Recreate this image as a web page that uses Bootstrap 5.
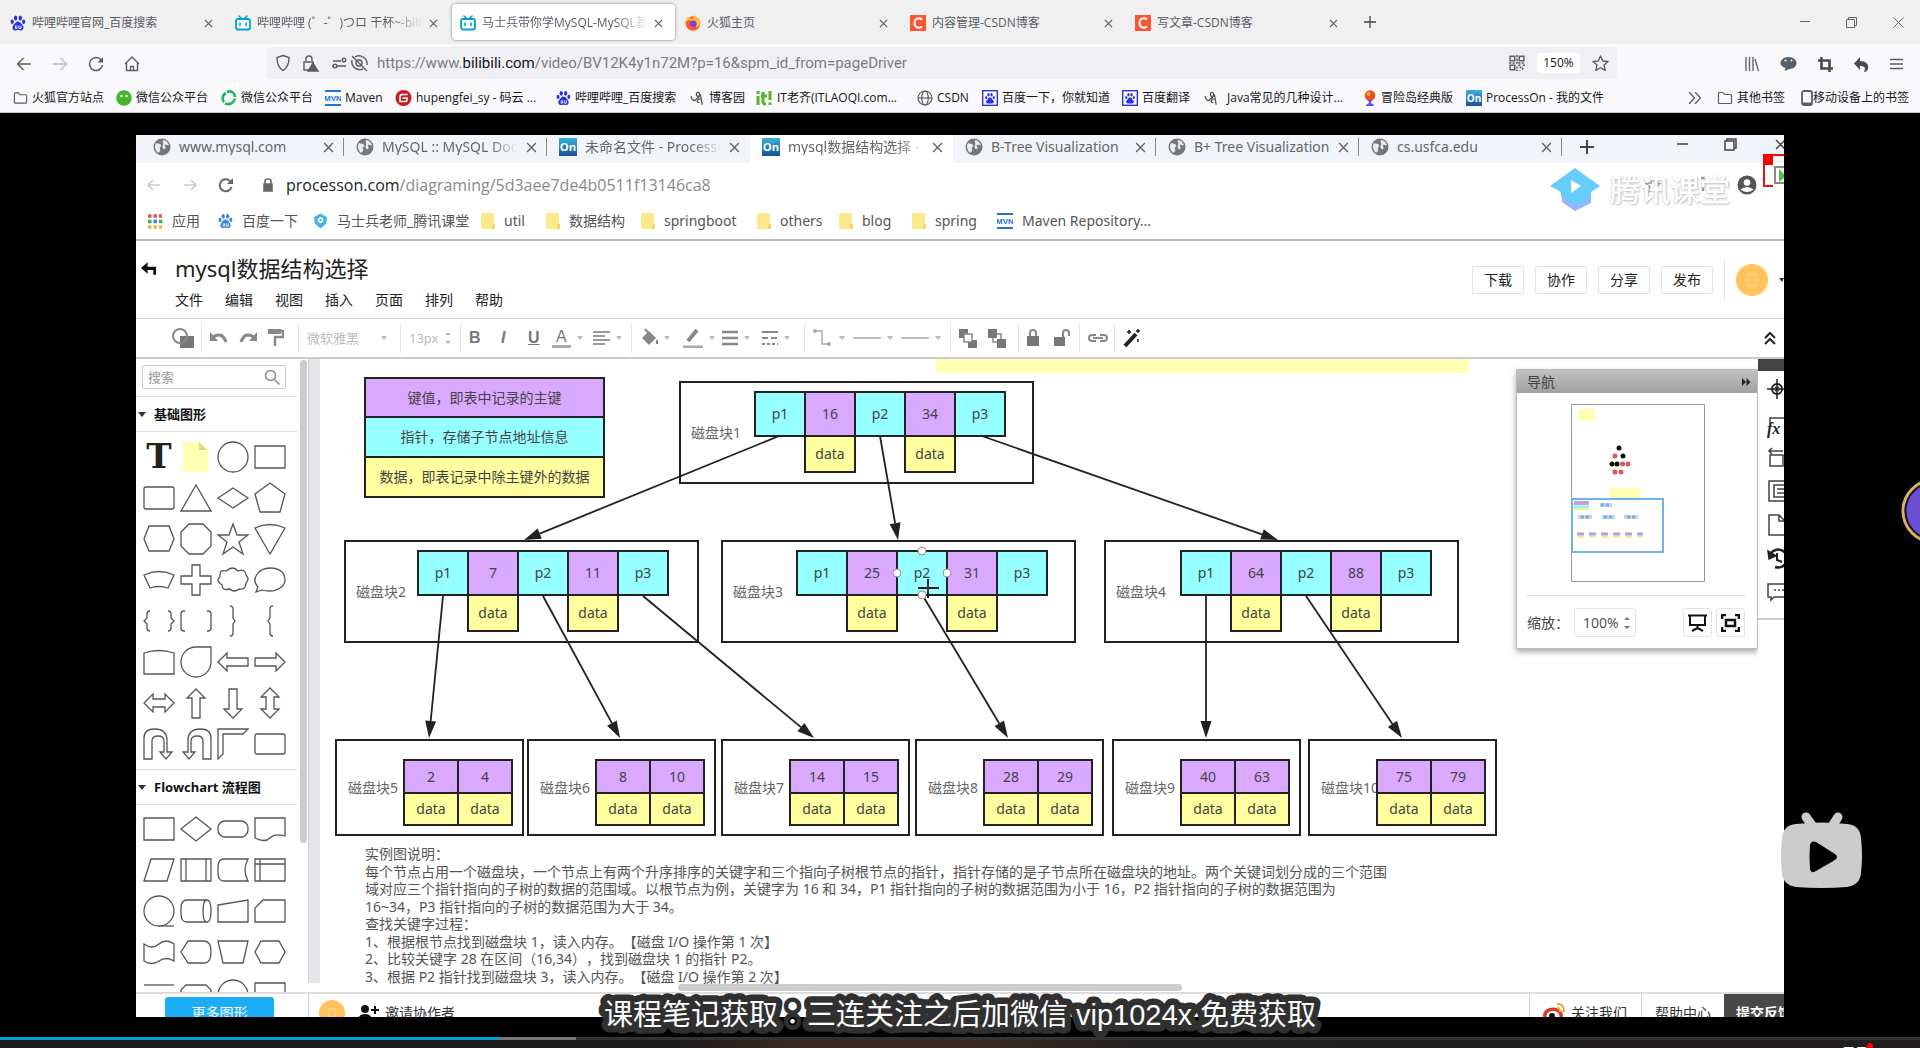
<!DOCTYPE html>
<html lang="zh-CN">
<head>
<meta charset="utf-8">
<meta name="viewport" content="width=device-width, initial-scale=1">
<title>马士兵带你学MySQL</title>
<link href="https://cdn.jsdelivr.net/npm/bootstrap@5.3.0/dist/css/bootstrap.min.css" rel="stylesheet">
<style>
:root{--ui:"Noto Sans","Noto Sans CJK SC",sans-serif}
body{font-family:"Open Sans","Noto Sans CJK SC",sans-serif;font-size:12px;line-height:16px;color:#15141a;background:#000;overflow:hidden}
svg{display:block;flex:none}
button,a.plain{background:none;border:0;padding:0;color:inherit;font:inherit;text-decoration:none;text-align:left}
.clip{overflow:hidden;white-space:nowrap}
.fadeout{-webkit-mask-image:linear-gradient(90deg,#000 80%,transparent)}
/* outer browser */
.tabstrip{height:44px;background:#f0f0f0;padding-left:2px}
.ff-tab{width:225px;height:44px;padding:4px 2px 4px 0}
.ff-tab>div{height:36px;padding:2px 12px 0 8px;gap:6px;color:#5b5b66;border-radius:4px}
.ff-tab.on>div{background:#fff;box-shadow:0 0 3px rgba(0,0,0,.5)}
.newtab{margin-left:12px!important}
.winbtns{gap:36px}
.navrow{height:36px;background:#f9f9fb}
.navbtns{gap:20px;top:12px}
.exts{gap:21px;padding-right:17px;top:12px}
.addr{height:32px;background:#f0f0f4;border-radius:4px;margin:2px 303px 0 267px;padding:0 8px;font-size:15px;color:#7b7b85}
.addr .urltext{font-family:Roboto,sans-serif;padding-left:8px;line-height:20px}
.addr b{font-weight:400;color:#15141a}
.zoomlvl{background:#fff;border-radius:3px;width:43px;height:20px;line-height:20px;text-align:center;font-size:12px;color:#15141a}
.bmrow{height:33px;background:#f9f9fb;border-bottom:1px solid #ccc;padding:4px 11px 0 13px}
.bmgrid{display:grid;grid-template-columns:103px 105px 104px 70px 161px 134px 66px 161px 65px 140px 82px 159px 103px 150px;align-items:center}
.bm{display:flex;align-items:center;gap:4px;white-space:nowrap}
/* stage */
.stage{padding:22px 136px 20px;min-height:0}
.video{background:#fff;color:#444;font-family:var(--ui);overflow:hidden;position:relative}
.c-tabs{height:28px;background:#f1f4f9;font-size:14px;padding-left:5px}
.c-tab{width:203px;height:28px;padding:0 9px 0 12px;gap:8px;border-right:1px solid transparent;margin-top:-2px;color:#666}
.c-tab.sep{border-image:linear-gradient(transparent 20%,#888 20%,#888 80%,transparent 80%) 1}
.c-tab.on{background:#fff;height:30px;border-bottom:2px solid #fff}
.c-url{height:44px;font-size:16px;color:#8a8a8a;padding:0 27px 0 9px;font-family:"Open Sans",sans-serif}
.c-bms{height:34px;border-bottom:2px solid #bbb;font-size:14px;color:#555;padding:0 0 5px 11px}
.c-bmgrid{display:grid;grid-template-columns:71px 95px 168px 65px 95px 116px 82px 73px 85px 150px;align-items:center}
.c-bmgrid .bm{gap:9px}
.p-head{height:78px;border-bottom:1px solid #ccc;color:#222}
.p-back{margin-right:17px}
.p-title{font-size:22px;line-height:24px;margin-top:-1px}
.p-menu{gap:22px;font-size:14px}
.p-acts{gap:11px}
.p-acts .vline{height:38px}
.p-acts .car{border-top-color:#333;border-width:4px 2px 0 3px}
.p-btn{width:52px;height:28px;border:1px solid #e2e2e2;border-radius:2px;font-size:14px;text-align:center!important}
.avatar{width:32px;height:32px;border-radius:50%;background:#ffc25c}
.avatar.sm{width:26px;height:26px}
.p-tools{height:40px;border-bottom:2px solid #ccc;font-size:13px;color:#bbb;padding:0 7px 0 36px}
.t-grid{display:grid;height:38px;align-items:center;grid-template-columns:38px 29px 28px 40px 102px 60px 32px 27px 24px 41px 47px 43px 39px 40px 51px 26px 48px 72px 29px 39px 27px 34px 35px 30px}
.t-grid>*{height:38px;display:flex;align-items:center;gap:6px;position:relative}
.t-grid>.dv::before{content:"";position:absolute;left:-9px;top:4px;bottom:4px;border-left:1px solid #e4e4e4}
.t-grid .ts{font-family:"Liberation Sans",sans-serif;font-size:16px;color:#777}
.t-grid .ul{border-bottom:3px solid #aaa;line-height:17px;padding:0 4px}
.car{width:0;height:0;border:3px solid transparent;border-top:4px solid #bbb;border-bottom:0}
.palette{width:172px;overflow:hidden}
.p-search{margin:6px 0 7px 6px;width:144px;height:24px;border:1px solid #ccc;border-radius:2px;padding:0 5px}
.p-search input{border:0;outline:0;padding:0;width:100px;font-size:13px;color:#666;background:none}
.p-search input::placeholder{color:#999}
.sect{height:36px;border-top:1px solid #ddd;border-bottom:1px solid #ddd;width:161px;font-weight:700;font-size:13px;color:#111;padding-left:2px;gap:8px}
.sect .car{border-width:4px;border-top:5px solid #333;border-bottom:0}
.shapes{display:grid;grid-template-columns:repeat(4,37px);grid-auto-rows:1fr;padding-left:5px;margin:5px 0 9px}
.shapes+.sect+.shapes{margin-top:4px}
.shapes svg{width:37px;height:100%;overflow:visible;fill:#fff;stroke:#555;stroke-width:1.3}
.s1{height:323px}.s2{height:202px}
.thumb{width:7px;background:#ccc;border-radius:4px;height:483px;margin-left:-8px;margin-top:1px}
.gutter{width:12px;background:#e6e6ea;border-left:1px solid #d0d0d0;margin-left:1px;margin-bottom:9px}
.board{position:relative;overflow:hidden;min-width:0}
.board svg text{font-family:var(--ui);font-size:14px;text-spacing-trim:space-all}
.navpanel{position:absolute;right:0;top:10px;width:242px;height:280px;background:#fff;border:1px solid #bbb;box-shadow:0 3px 6px rgba(0,0,0,.35);font-size:14px}
.navpanel .hd{height:23px;background:linear-gradient(#c2c2c2,#a0a0a0);color:#444;padding:0 6px 0 10px}
.navpanel .map{margin:11px 0 13px 54px}
.navpanel .ft{border-top:1px solid #ddd;margin:0 12px 0 10px;padding-top:12px}
.navpanel .zoombox{width:62px;margin-left:5px}
.navpanel input{width:47px;padding:0 0 0 8px;border:0;font-size:14px;color:#555}
.box{border:1px solid #e4e4e4;border-radius:3px;height:29px}
.rail{width:26px}
.rail .cap{height:12px;background:#444}
.rail .body{height:249px;border-bottom:2px solid #ccc;padding:1px 0 0 8px}
.hthumb{position:absolute;left:358px;top:625px;width:504px;height:7px;border-radius:4px;background:#ccc}
.p-foot{height:25px;overflow:hidden;border-top:2px solid #ddd;font-size:14px;color:#333}
.p-foot>div{height:38px}
.more{width:109px;height:32px;border-radius:3px;background:#1badf5;color:#fff;margin:3px 34px 0 29px;text-align:center!important}
.fcell{border-left:1px solid #ccc;height:38px;padding-left:13px!important}
.fcell.fu{padding-left:10px!important}
a.plain.fcell{border-left:1px solid #ccc}
.f1{width:112px;gap:5px}.f2{width:83px}
a.plain.fdark{width:60px;height:38px;padding-left:12px;background:#484848;color:#fff;font-weight:700}
.overlay{position:absolute}
.wmark{right:54px;top:33px;gap:10px;font-size:30px;line-height:44px;color:#fff;text-shadow:1px 1px 2px #bbb,-1px 0 1px #e4e4e4;font-weight:500}
.redbox{right:0;top:19px}
.sub{left:0;right:0;bottom:0;height:70px}
.sub text{font:29px "Liberation Sans","Noto Sans CJK SC",sans-serif;fill:#fff;stroke:#303030;stroke-width:13px;stroke-linejoin:round;paint-order:stroke}
.sub .mid{font-family:"Noto Sans CJK TC",sans-serif}
.tv{right:57px;bottom:148px}
.ball{right:0;top:365px}
.prog{height:3px;background:#333}
.task{height:8px;background:linear-gradient(90deg,#1d1d1e 35%,#3b2822 42%,#3a2822 50%,#222 60%,#221f20);overflow:hidden;color:#fff;padding-right:52px;font-size:13px}
.dot{right:47px;top:3px}
</style>
</head>
<body class="d-flex flex-column vh-100">
<svg width="0" height="0" class="position-absolute" aria-hidden="true">
<defs>
<symbol id="baidu" viewBox="0 0 16 16"><g fill="currentColor"><ellipse cx="5.6" cy="3" rx="1.7" ry="2.5"/><ellipse cx="10.3" cy="3" rx="1.7" ry="2.5"/><ellipse cx="2.2" cy="6.8" rx="1.6" ry="2.2"/><ellipse cx="13.7" cy="6.8" rx="1.6" ry="2.2"/><path d="M8 6.5c2 0 3 2 4.500 3.500s1.500 5-1.500 5.500c-1.500 0-2-.4-3-.4s-1.500.4-3 .4C2 15 2 11.500 3.500 10S6 6.500 8 6.500z"/></g><path d="M5.500 10.500v3h1.500v-3M9 10.500v3h2v-3" stroke="#fff" fill="none" stroke-width=".9"/></symbol>
<symbol id="bdsq" viewBox="0 0 16 16"><rect x=".7" y=".7" width="14.600" height="14.600" fill="#fff" stroke="#2932e1" stroke-width="1.400"/><g fill="#2932e1"><ellipse cx="6.500" cy="4.800" rx="1.200" ry="1.700"/><ellipse cx="9.500" cy="4.800" rx="1.200" ry="1.700"/><ellipse cx="4.200" cy="7.500" rx="1.100" ry="1.500"/><ellipse cx="11.800" cy="7.500" rx="1.100" ry="1.500"/><path d="M8 7.200c2 .5 2 2 3.200 3s.8 3.300-1.200 3.300H6c-2 0-2.400-2.300-1.200-3.300s1.200-2.500 3.200-3z"/></g></symbol>
<symbol id="bili" viewBox="0 0 16 16"><path d="M4 1l2.500 2.500M12 1L9.500 3.500" stroke="#00a1d6" stroke-width="1.600" stroke-linecap="round"/><rect x="1" y="4" width="14" height="10.500" rx="2" fill="#fff" stroke="#00a1d6" stroke-width="1.800"/><path d="M5 8v2.500M11 8v2.500" stroke="#00a1d6" stroke-width="1.600" stroke-linecap="round"/></symbol>
<symbol id="fox" viewBox="0 0 16 16"><circle cx="8" cy="8.500" r="7.300" fill="#ff5a2e"/><path d="M1 7c0-3 1.500-4 2-5.500C5 3 6 4 8 4c0-2 1-3 2-4 1 2 5 3.500 5.300 8C13 15 9 11 9 8S3 4 1 7z" fill="#ffc02e"/><circle cx="8.300" cy="8.800" r="3.300" fill="#7a3fe0"/></symbol>
<symbol id="cs" viewBox="0 0 16 16"><rect width="16" height="16" fill="#fc5531"/><path d="M12 4.500C9 2 4.500 3.800 4.500 8s4.500 6 7.500 3.500" fill="none" stroke="#fff" stroke-width="1.900"/></symbol>
<symbol id="x" viewBox="0 0 10 10"><path d="M1 1l8 8M9 1L1 9" stroke="currentColor" stroke-width="1.300"/></symbol>
<symbol id="fold" viewBox="0 0 16 16"><path d="M1.500 12.500v-9q0-1 1-1h3.500l1.500 2h6q1 0 1 1v7q0 1-1 1h-11q-1 0-1-1z" fill="none" stroke="#5b5b66" stroke-width="1.200"/></symbol>
<symbol id="yfold" viewBox="0 0 14 16"><rect x="0" y="0" width="13" height="16" rx="1.500" fill="#fbe98c"/><path d="M11 11h3v5h-3z" fill="#f2d767"/></symbol>
<symbol id="mvn" viewBox="0 0 16 16"><rect y="0" width="16" height="2" fill="#1d76d2"/><rect y="14" width="16" height="2" fill="#1d76d2"/><text x="8" y="11" text-anchor="middle" font-size="8" font-weight="700" fill="#1d76d2" font-family="Liberation Sans,sans-serif">MVN</text></symbol>
<linearGradient id="og" x2="0" y2="1"><stop stop-color="#3ab0dc"/><stop offset="1" stop-color="#14539b"/></linearGradient>
<symbol id="on" viewBox="0 0 16 16"><rect width="16" height="16" fill="url(#og)"/><text x="8" y="11.500" text-anchor="middle" font-size="10" font-weight="700" fill="#fff" font-family="Open Sans,sans-serif">On</text></symbol>
<symbol id="blog" viewBox="0 0 16 16"><path d="M1 6c1 5 4 6 6 3M7 9c3-2 4-4 3-6S6 2 7 5s4 0 4-1l2 11M11 9c-3 0-5 4-1 4" fill="none" stroke="#555" stroke-width="1.400"/></symbol>
<symbol id="globe" viewBox="0 0 18 18"><circle cx="9" cy="9" r="8.500" fill="#777"/><path d="M3 5c2 1 4 0 5 2s-2 2-1 4-1 3-2 4C2 12 1 8 3 5zM10 2c3 0 5 3 6 5-2 1-3-1-4 0s2 3 0 4-3-2-2-4-1-3 0-5z" fill="#e8ebf0"/></symbol>
</defs>
</svg>

<header class="flex-shrink-0">
<div class="tabstrip d-flex align-items-center">
<div class="ff-tab"><div class="d-flex align-items-center"><svg width="16" height="16" color="#2932e1"><use href="#baidu"/></svg><span class="clip flex-grow-1">哔哩哔哩官网_百度搜索</span><button aria-label="关闭"><svg width="9" height="9"><use href="#x"/></svg></button></div></div>
<div class="ff-tab"><div class="d-flex align-items-center"><svg width="16" height="16"><use href="#bili"/></svg><span class="clip flex-grow-1 fadeout">哔哩哔哩 (゜-゜)つロ 干杯~-bili</span><button aria-label="关闭"><svg width="9" height="9"><use href="#x"/></svg></button></div></div>
<div class="ff-tab on"><div class="d-flex align-items-center"><svg width="16" height="16"><use href="#bili"/></svg><span class="clip flex-grow-1 fadeout">马士兵带你学MySQL-MySQL基</span><button aria-label="关闭"><svg width="9" height="9"><use href="#x"/></svg></button></div></div>
<div class="ff-tab"><div class="d-flex align-items-center"><svg width="16" height="16"><use href="#fox"/></svg><span class="clip flex-grow-1">火狐主页</span><button aria-label="关闭"><svg width="9" height="9"><use href="#x"/></svg></button></div></div>
<div class="ff-tab"><div class="d-flex align-items-center"><svg width="16" height="16"><use href="#cs"/></svg><span class="clip flex-grow-1">内容管理-CSDN博客</span><button aria-label="关闭"><svg width="9" height="9"><use href="#x"/></svg></button></div></div>
<div class="ff-tab"><div class="d-flex align-items-center"><svg width="16" height="16"><use href="#cs"/></svg><span class="clip flex-grow-1">写文章-CSDN博客</span><button aria-label="关闭"><svg width="9" height="9"><use href="#x"/></svg></button></div></div>
<button class="newtab" aria-label="新标签"><svg width="12" height="12" viewBox="0 0 12 12"><path d="M6 0v12M0 6h12" stroke="#444" stroke-width="1.300"/></svg></button>
<div class="winbtns ms-auto d-flex align-items-center pe-3">
<button aria-label="最小化"><svg width="10" height="10" viewBox="0 0 10 10"><path d="M0 4.500h10" stroke="#666"/></svg></button>
<button aria-label="还原"><svg width="11" height="11" viewBox="0 0 11 11"><path d="M.5 2.500h8v8h-8zM2.500 2.500v-2h8v8h-2" fill="none" stroke="#666"/></svg></button>
<button aria-label="关闭窗口"><svg width="11" height="11" viewBox="0 0 11 11"><path d="M.5.5l10 10M10.500.5l-10 10" stroke="#666"/></svg></button>
</div>
</div>
<div class="navrow d-flex align-items-center position-relative">
<div class="overlay navbtns d-flex align-items-center ps-3">
<button aria-label="后退"><svg width="16" height="16" viewBox="0 0 16 16"><path d="M15 8H1.500M7.500 2l-6 6 6 6" fill="none" stroke="#5b5b66" stroke-width="1.400"/></svg></button>
<button aria-label="前进"><svg width="16" height="16" viewBox="0 0 16 16"><path d="M1 8h13.500M8.500 2l6 6-6 6" fill="none" stroke="#bdbdc2" stroke-width="1.400"/></svg></button>
<button aria-label="刷新"><svg width="16" height="16" viewBox="0 0 16 16"><path d="M13.500 4.500A6.500 6.500 0 1 0 14.500 9" fill="none" stroke="#5b5b66" stroke-width="1.500"/><path d="M15 1v5.500H9.500z" fill="#5b5b66"/></svg></button>
<button aria-label="主页"><svg width="16" height="16" viewBox="0 0 16 16"><path d="M1 8l7-7 7 7M2.500 7v7.500h11V7M6.500 14.500v-4h3v4" fill="none" stroke="#5b5b66" stroke-width="1.400"/></svg></button>
</div>
<div class="addr d-flex align-items-center flex-grow-1">
<svg width="94" height="18" viewBox="0 0 94 18" fill="none" stroke="#5b5b66" stroke-width="1.400"><path d="M8 1.500l6 2c0 6-1 10-6 13-5-3-6-7-6-13z"/><path d="M31 7V5a3 3 0 0 1 6 0v2M36 16h-7V8h9v2"/><path d="M38 9l5 8H33z" fill="#5b5b66"/><path d="M58 7h8M57 12h14" /><circle cx="69" cy="6" r="1.800"/><circle cx="60" cy="12" r="1.800" fill="#f0f0f4"/><circle cx="84" cy="9" r="3"/><path d="M80 3a8 8 0 0 1 12 8M88 15a8 8 0 0 1-11-9M77 2l15 15"/></svg>
<div class="clip flex-grow-1 urltext" role="textbox" contenteditable="true" aria-label="地址">https://www.<b>bilibili.com</b>/video/BV12K4y1n72M?p=16&amp;spm_id_from=pageDriver</div>
<svg class="me-2" width="16" height="16" viewBox="0 0 14 14" fill="none" stroke="#5b5b66" stroke-width="1.300"><path d="M1 1h4v4H1zM9 1h4v4H9zM1 9h4v4H1z"/><path d="M7 0v7H0M8 7h6M8 9h2v2h2v3M12 9h2M7 10v4h3" stroke-dasharray="2 1"/></svg>
<span class="zoomlvl mx-1">150%</span>
<svg class="ms-2" width="17" height="17" viewBox="0 0 16 16"><path d="M8 1l2.100 4.600 5 .5-3.800 3.400 1.100 5L8 12l-4.400 2.500 1.100-5L.9 6.100l5-.5z" fill="none" stroke="#5b5b66" stroke-width="1.300" stroke-linejoin="round"/></svg>
</div>
<div class="overlay exts end-0 d-flex align-items-center">
<svg width="14" height="16" viewBox="0 0 14 16" stroke="#5b5b66" stroke-width="1.300"><path d="M1 1v14M4.500 1v14M8 1v14M10 3l3.500 12"/></svg>
<svg width="17" height="16" viewBox="0 0 17 16"><path d="M8.500 1c5 0 8 3 8 6s-3 6-7 6l-5 2 1-3C2 11 .5 9 .5 7c0-3 3-6 8-6z" fill="#53616e"/><circle cx="5.500" cy="4.500" r="1" fill="#fff"/><circle cx="11.500" cy="4.500" r="1" fill="#fff"/></svg>
<svg width="15" height="15" viewBox="0 0 15 15" fill="none" stroke="#4a4a55" stroke-width="2.600"><path d="M3.500 0v11.500H15M0 3.500h11.500V15"/></svg>
<svg width="15" height="15" viewBox="0 0 15 15"><path d="M6 0v4c6 0 9 3 8 8-1 2-2 3-4 3 2-4 1-6-4-6v4L0 6.500z" fill="#4a4a55"/></svg>
<svg width="13" height="12" viewBox="0 0 13 12" stroke="#5b5b66" stroke-width="1.300"><path d="M0 1.500h13M0 6h13M0 10.500h13"/></svg>
</div>
</div>
<nav class="bmrow d-flex align-items-center" aria-label="书签">
<div class="bmgrid">
<a href="#" class="plain bm"><svg width="15" height="16"><use href="#fold"/></svg>火狐官方站点</a>
<a href="#" class="plain bm"><svg width="16" height="16" viewBox="0 0 16 16"><circle cx="8" cy="8" r="7.800" fill="#47b52c"/><circle cx="5.500" cy="6" r="1.200" fill="#fff"/><circle cx="10.500" cy="6" r="1.200" fill="#fff"/></svg>微信公众平台</a>
<a href="#" class="plain bm"><svg width="16" height="16" viewBox="0 0 16 16" fill="none" stroke="#1db960" stroke-width="2.600"><path d="M5 3c-4 2-4 7-2 9M4 13.500c5 2 9-1 10-5M6 2c4-2 8 1 8 5"/></svg>微信公众平台</a>
<a href="#" class="plain bm"><svg width="16" height="16"><use href="#mvn"/></svg>Maven</a>
<a href="#" class="plain bm"><svg width="17" height="16" viewBox="0 0 16 16"><circle cx="8" cy="8" r="8" fill="#c71d23"/><path d="M12 4.500H7Q4.500 4.500 4.500 7v4.500H10q1.500 0 1.500-1.500V8H7" fill="none" stroke="#fff" stroke-width="1.600"/></svg>hupengfei_sy - 码云 ...</a>
<a href="#" class="plain bm"><svg width="15" height="16" color="#2932e1"><use href="#baidu"/></svg>哔哩哔哩_百度搜索</a>
<a href="#" class="plain bm"><svg width="15" height="16"><use href="#blog"/></svg>博客园</a>
<a href="#" class="plain bm"><svg width="17" height="16" viewBox="0 0 17 16"><path d="M2 6v9M2 1v3M7 2v10q0 2 3 2M5 6h6M14 1v9M14 12.500v2.500" stroke="#5cb02c" stroke-width="3" fill="none"/></svg>IT老齐(ITLAOQI.com...</a>
<a href="#" class="plain bm"><svg width="16" height="16" viewBox="0 0 16 16" fill="none" stroke="#5b5b66" stroke-width="1.200"><circle cx="8" cy="8" r="7"/><ellipse cx="8" cy="8" rx="3.300" ry="7"/><path d="M1 8h14"/></svg>CSDN</a>
<a href="#" class="plain bm"><svg width="16" height="16"><use href="#bdsq"/></svg>百度一下，你就知道</a>
<a href="#" class="plain bm"><svg width="16" height="16"><use href="#bdsq"/></svg>百度翻译</a>
<a href="#" class="plain bm"><svg class="me-1" width="15" height="16"><use href="#blog"/></svg>Java常见的几种设计...</a>
<a href="#" class="plain bm"><svg width="14" height="16" viewBox="0 0 14 16"><circle cx="7" cy="5.500" r="5.300" fill="#e8501e"/><circle cx="5.500" cy="4" r="2" fill="#ffa64d"/><path d="M5 10h4l-1 3 3 2v1H3v-1l3-2z" fill="#6b4fe0"/></svg>冒险岛经典版</a>
<a href="#" class="plain bm"><svg width="16" height="16"><use href="#on"/></svg>ProcessOn - 我的文件</a>
</div>
<div class="ms-auto d-flex align-items-center gap-3">
<svg width="13" height="12" viewBox="0 0 13 12" fill="none" stroke="#5b5b66" stroke-width="1.300"><path d="M1 0l5.500 6L1 12M7 0l5.500 6L7 12"/></svg>
<a href="#" class="plain bm"><svg width="16" height="16"><use href="#fold"/></svg>其他书签</a>
<a href="#" class="plain bm gap-0"><svg width="12" height="16" viewBox="0 0 12 16"><rect x="1" y="1" width="10" height="14" rx="2" fill="none" stroke="#5b5b66" stroke-width="1.800"/><path d="M1 12.500h10v2H1z" fill="#5b5b66"/></svg>移动设备上的书签</a>
</div>
</nav>
</header>

<main class="stage flex-grow-1 d-flex position-relative">
<section class="video flex-grow-1 d-flex flex-column">
<div class="c-tabs d-flex flex-shrink-0 align-items-start" id="ctabs"></div>
<div class="c-url d-flex flex-shrink-0 align-items-center">
<svg width="141" height="18" viewBox="0 0 141 18" fill="none" stroke="#ccc" stroke-width="1.600"><path d="M15 9H3M8 4L3 9l5 5M39 9h12M46 4l5 5-5 5"/><path d="M85 5a6 6 0 1 0 1.500 6" stroke="#666" stroke-width="2"/><path d="M88 2v6h-6z" fill="#666" stroke="none"/><path d="M119 8h8v7h-8z" fill="#666" stroke="#666"/><path d="M120 8V5q0-2 3-2t3 2v3" stroke="#666"/></svg>
<div role="textbox" aria-label="网址"><span class="text-dark">processon.com</span>/diagraming/5d3aee7de4b0511f13146ca8</div>
<svg class="ms-auto" width="120" height="20" viewBox="0 0 120 20"><path d="M16 3l2 5 5 .5-4 3.500 1 5-4-3-4 3 1-5-4-3.500 5-.5z" fill="none" stroke="#999" stroke-width="1.500"/><path d="M55 4h6M58 4v8M64 3h6v4h-4v9" stroke="#999" fill="none" stroke-width="2.500"/><circle cx="110" cy="10" r="9.500" fill="#555"/><circle cx="110" cy="7.500" r="3.300" fill="#fff"/><path d="M103.500 14.500q6.500-5 13 0-6.500 5-13 0z" fill="#fff"/></svg>
</div>
<div class="c-bms flex-shrink-0 d-flex align-items-center">
<div class="c-bmgrid">
<a href="#" class="plain bm"><svg width="16" height="16" viewBox="0 0 16 16"><path d="M1 3h14" stroke="#e2574c" stroke-width="3.500" stroke-dasharray="3.500 2"/><path d="M1 8.500h3.500M12 8.500h3.500" stroke="#3fae5a" stroke-width="3.500"/><path d="M6.500 8.500H10" stroke="#3f7de0" stroke-width="3.500"/><path d="M1 14h14" stroke="#e9b93b" stroke-width="3.500" stroke-dasharray="3.500 2"/></svg>应用</a>
<a href="#" class="plain bm"><svg width="15" height="16" color="#3a80e8"><use href="#baidu"/></svg>百度一下</a>
<a href="#" class="plain bm"><svg width="15" height="16" viewBox="0 0 16 16"><path d="M8 0l7 4-1 7-6 5-6-5-1-7z" fill="#3db4ee"/><circle cx="8" cy="7" r="3" fill="#fff"/><circle cx="8" cy="7" r="1.200" fill="#3db4ee"/></svg>马士兵老师_腾讯课堂</a>
<a href="#" class="plain bm"><svg width="14" height="16"><use href="#yfold"/></svg>util</a>
<a href="#" class="plain bm"><svg width="14" height="16"><use href="#yfold"/></svg>数据结构</a>
<a href="#" class="plain bm"><svg width="14" height="16"><use href="#yfold"/></svg>springboot</a>
<a href="#" class="plain bm"><svg width="14" height="16"><use href="#yfold"/></svg>others</a>
<a href="#" class="plain bm"><svg width="14" height="16"><use href="#yfold"/></svg>blog</a>
<a href="#" class="plain bm"><svg width="14" height="16"><use href="#yfold"/></svg>spring</a>
<a href="#" class="plain bm"><svg width="16" height="18"><use href="#mvn"/></svg>Maven Repository...</a>
</div>
</div>
<div class="p-head flex-shrink-0 d-flex">
<button class="p-back align-self-start ps-1 pt-3" aria-label="返回"><svg class="mt-1" width="18" height="16" viewBox="0 0 19 16"><path d="M1 7l7-6v4.500h9V14h-3V9H8v4z" fill="#111"/></svg></button>
<div class="pt-3">
<div class="p-title">mysql数据结构选择</div>
<div class="p-menu d-flex mt-2 pt-1"><a class="plain" href="#">文件</a><a class="plain" href="#">编辑</a><a class="plain" href="#">视图</a><a class="plain" href="#">插入</a><a class="plain" href="#">页面</a><a class="plain" href="#">排列</a><a class="plain" href="#">帮助</a></div>
</div>
<div class="p-acts ms-auto d-flex align-items-center">
<button class="p-btn">下载</button><button class="p-btn">协作</button><button class="p-btn">分享</button><button class="p-btn">发布</button>
<span class="border-start vline"></span>
<span class="avatar d-flex align-items-center justify-content-center"><svg width="10" height="14"><rect x="1" y="1" width="8" height="12" fill="none" stroke="#ffdc8c"/></svg></span>
<span class="car"></span>
</div>
</div>
<div class="p-tools flex-shrink-0 d-flex align-items-center justify-content-between">
<div class="t-grid" id="tools"></div>
<svg width="14" height="14" viewBox="0 0 14 14" fill="none" stroke="#222" stroke-width="2"><path d="M2 7l5-5 5 5M2 13l5-5 5 5"/></svg>
</div>
<div class="flex-grow-1 d-flex overflow-hidden">
<aside class="palette flex-shrink-0">
<label class="p-search d-flex align-items-center justify-content-between"><input type="text" placeholder="搜索" aria-label="搜索"><svg width="16" height="16" viewBox="0 0 16 16" fill="none" stroke="#888" stroke-width="1.500"><circle cx="6.500" cy="6.500" r="5"/><path d="M10.500 10.500l5 5"/></svg></label>
<div class="sect d-flex align-items-center"><span class="car"></span>基础图形</div>
<div class="shapes s1" id="s1"></div>
<div class="sect d-flex align-items-center"><span class="car"></span>Flowchart 流程图</div>
<div class="shapes s2" id="s2"></div>
</aside>
<div class="thumb flex-shrink-0"></div>
<div class="gutter flex-shrink-0"></div>
<div class="board flex-grow-1">
<svg id="dia" width="1438" height="633" viewBox="320 359 1438 633"></svg>
<div class="hthumb"></div>
<div class="navpanel">
<div class="hd d-flex align-items-center justify-content-between">导航<svg width="9" height="8" viewBox="0 0 9 8"><path d="M0 0l4 4-4 4zM4.500 0l4 4-4 4z" fill="#222"/></svg></div>
<svg class="map" width="134" height="178" viewBox="1571 404 134 178"><path d="M1571.500 404.500h133v177h-133z" fill="#fff" stroke="#999"/><path d="M1578 409h17v12h-17zM1609 488h31v10h-31z" fill="#ffffb3"/><g fill="#111"><circle cx="1619" cy="448" r="2.500"/><circle cx="1623" cy="456" r="2.500"/><circle cx="1612" cy="464" r="2.500"/><circle cx="1617" cy="464" r="2.500"/></g><g fill="#df5560"><circle cx="1615" cy="456" r="2.500"/><circle cx="1622.500" cy="464" r="2.500"/><circle cx="1628" cy="464" r="2.500"/><circle cx="1615" cy="472" r="2.500"/><circle cx="1621" cy="472" r="2.500"/></g><path d="M1572 499h91v53h-91z" fill="#fff" stroke="#6fb1ea" stroke-width="2"/><path d="M1574 503h15" stroke="#bfa2e8" stroke-width="4"/><path d="M1574 507h15" stroke="#9eeef2" stroke-width="3"/><path d="M1574 509.500h15" stroke="#f3f097" stroke-width="2"/><g stroke="#a9dfee" stroke-width="4"><path d="M1600 505h12M1578 517h14M1602 517h13M1624 517h14"/></g><g stroke="#a99add" stroke-width="3" stroke-dasharray="3 2"><path d="M1601 505h10M1581 517h10M1604 517h10M1627 517h9"/></g><path d="M1577 534h66" stroke="#b0a0dd" stroke-width="3" stroke-dasharray="7 5"/><path d="M1577 537h66" stroke="#f3ef98" stroke-width="2" stroke-dasharray="7 5"/></svg>
<div class="ft d-flex align-items-center"><label for="zm">缩放：</label>
<span class="box zoombox d-flex align-items-center"><input id="zm" type="text" value="100%"><svg width="10" height="16" viewBox="0 0 10 16"><path d="M2 5l3-3 3 3zM2 11l3 3 3-3z" fill="#777"/></svg></span>
<button class="box ms-auto px-1" aria-label="演示"><svg width="19" height="18" viewBox="0 0 19 18" fill="none" stroke="#111" stroke-width="2"><path d="M0 1.500h19M2 2v9h15V2M9.500 11v3M4 17l5.500-3 5.500 3"/></svg></button>
<button class="box ms-1 px-1" aria-label="全屏"><svg width="19" height="18" viewBox="0 0 19 18" fill="none" stroke="#111" stroke-width="2.500"><path d="M5 6h9v6H5zM1 5V1h4M14 1h4v4M18 13v4h-4M5 17H1v-4"/></svg></button></div>
</div>
</div>
<div class="rail flex-shrink-0"><div class="cap"></div><div class="body">
<svg width="18" height="240" viewBox="1766 373 18 240" fill="none" stroke="#444" stroke-width="1.500"><circle cx="1777" cy="390" r="5" stroke="#222" stroke-width="2"/><path d="M1777 380v20M1767 390h20" stroke="#222" stroke-width="1.500"/><circle cx="1777" cy="390" r="2" fill="#222"/><path d="M1770 425v-6h18v10"/><text x="1767" y="435" font-family="Liberation Serif,serif" font-size="16" font-style="italic" font-weight="700" fill="#222" stroke="none">fx</text><path d="M1770 456h13v11h-13zM1769 452h14M1772 449l-3 3 3 3"/><path d="M1769 482h20v20h-20zM1774 486h12v12h-12zM1777 490h8M1777 494h8"/><path d="M1769 516h10l6 6v14h-16zM1779 516v6h6"/><path d="M1771 554a9 9 0 1 1 4 14" stroke="#222" stroke-width="2.500"/><path d="M1768 552l1 8 7-3z" fill="#222" stroke="#222"/><path d="M1777 554v7l5 2" stroke="#222" stroke-width="2"/><path d="M1768 585h20v13h-14l-3 3v-3h-3z"/><path d="M1774 591h10" stroke-dasharray="2 2"/></svg>
</div></div>
</div>
<div class="p-foot flex-shrink-0"><div class="d-flex align-items-start">
<button class="more">更多图形</button>
<div class="fcell fu d-flex align-items-center"><span class="avatar sm d-flex align-items-center justify-content-center"><svg width="8" height="10"><rect x="1" y="1" width="6" height="8" fill="none" stroke="#ffdc8c"/></svg></span><svg class="ms-2 ps-1" width="28" height="20" viewBox="0 0 24 18"><circle cx="8" cy="5" r="4" fill="#111"/><path d="M1 17q0-7 7-7t7 7z" fill="#111"/><path d="M18 2v8M14 6h8" stroke="#111" stroke-width="2"/></svg><span class="ms-1">邀请协作者</span></div>
<div class="ms-auto d-flex">
<a href="#" class="plain fcell f1 d-flex align-items-center"><svg width="23" height="22" viewBox="0 0 23 22"><ellipse cx="10" cy="13" rx="10" ry="7.500" fill="#dd3a2f"/><ellipse cx="10" cy="14" rx="6.500" ry="5" fill="#fff"/><circle cx="9" cy="14" r="3" fill="#111"/><path d="M14 2q7-1 7 8M14 6q3 0 3 4" fill="none" stroke="#f0a53a" stroke-width="2"/></svg>关注我们</a>
<a href="#" class="plain fcell f2 d-flex align-items-center">帮助中心</a>
<a href="#" class="plain fdark d-flex align-items-center clip">提交反馈</a>
</div></div></div>
<div class="overlay wmark d-flex align-items-center"><svg width="50" height="44" viewBox="0 0 50 44"><path d="M12 30l13-6 16 4v7L25 43 12 34z" fill="#9fb0ff"/><path d="M25 0l25 18-9 6v6l-16 8-14-9v-5L0 18z" fill="#66cdfc"/><path d="M21 12l10 6-10 7z" fill="#fff"/></svg>腾讯课堂</div>
<svg class="overlay redbox" width="21" height="34" viewBox="0 0 21 34"><path d="M21 1H1v31h9" fill="none" stroke="#e11" stroke-width="2"/><path d="M0 0h10v11H0z" fill="#f00"/><path d="M21 13h-9v16h9" fill="#fff" stroke="#888" stroke-width="2"/><path d="M16 15l5 5v4l-5 4z" fill="#4dc247"/></svg>
</section>
<svg class="overlay sub w-100"><text x="50%" y="58" text-anchor="middle">课程笔记获取<tspan class="mid" lang="zh-TW">：</tspan>三连关注之后加微信 vip1024x 免费获取</text></svg>
<svg class="overlay tv" width="83" height="78" viewBox="0 0 83 78"><path d="M26 6l8 11M58 6l-7 11" stroke="#ccc" stroke-width="9" stroke-linecap="round"/><path d="M16 13q26-3 51 0 13 1 14 14 2 18 0 35-1 12-14 14-26 2-51 0Q3 74 2 62 0 45 2 27 3 14 16 13z" fill="#ccc"/><path d="M30 34q1-5 6-3l19 12q4 3 0 6L36 60q-5 3-6-2-1-12 0-24z" fill="#000"/></svg>
<svg class="overlay ball" width="19" height="66" viewBox="0 0 19 66"><circle cx="33" cy="33" r="31" fill="#5b3fb8" stroke="#d9b25a" stroke-width="3"/><circle cx="33" cy="33" r="28.500" fill="#6a4fd0" stroke="#1d1330" stroke-width="2"/></svg>
</main>
<div class="prog flex-shrink-0 d-flex"><div style="width:26%;background:#00a1d6"></div><div style="width:4%;background:#777"></div></div>
<div class="task flex-shrink-0 d-flex justify-content-end position-relative"><span class="pt-1">15:29 周日</span><svg class="overlay dot" width="6" height="5"><circle cx="3" cy="3" r="3" fill="red"/></svg></div>

<script src="https://cdn.jsdelivr.net/npm/bootstrap@5.3.0/dist/js/bootstrap.bundle.min.js"></script>
<script>
// Inner browser tabs: [icon, title, separator, active]
document.getElementById('ctabs').innerHTML=[
['globe','www.mysql.com',1],['globe','MySQL :: MySQL Docu',1],['on','未命名文件 - ProcessOn',0],['on','mysql数据结构选择 - P',0,1],['globe','B-Tree Visualization',1],['globe','B+ Tree Visualization',1],['globe','cs.usfca.edu',1]
].map(t=>`<div class="c-tab d-flex align-items-center ${t[2]?'sep':''} ${t[3]?'on':''}"><svg width="18" height="18"><use href="#${t[0]}"/></svg><span class="clip flex-grow-1 ${t[1].length>14&&!t[1].startsWith('B')?'fadeout':''}">${t[1]}</span><button aria-label="关闭"><svg width="11" height="11"><use href="#x"/></svg></button></div>`).join('')+
`<svg class="ms-3 mt-1" width="16" height="16" viewBox="-2 -1 16 16"><path d="M7 0v14M0 7h14" stroke="#444" stroke-width="2"/></svg>
<svg class="ms-auto" width="110" height="20" viewBox="0 0 110 20" fill="none" stroke="#444" stroke-width="1.500"><path d="M3 9h11M51 6h9v9h-9zM53 6V4h9v9h-2M102 5l9 9M111 5l-9 9"/></svg>`;

// Toolbar: a leading 1 puts a divider before the item
const c='<i class="car"></i>',s=(w,b)=>`<svg width="${w}" height="20" viewBox="0 0 ${w} 20" fill="none" stroke="#888" stroke-width="2">${b}</svg>`;
document.getElementById('tools').innerHTML=[
[0,s(22,'<path d="M8 8h14v12H8z" fill="#777" stroke="none"/><circle cx="8" cy="8" r="7"/>')],
[1,s(18,'<path d="M3 9q9-6 13 5" stroke-width="3"/><path d="M0 4v9h8z" fill="#888" stroke="none"/>')],
[0,s(18,'<path d="M15 9Q6 3 2 14" stroke-width="3"/><path d="M18 4v9h-8z" fill="#888" stroke="none"/>')],
[0,s(17,'<path d="M1 1h13v5H1z" fill="#888" stroke="none"/><path d="M13 3h3v6H8v9" stroke-width="2.500"/>')],
[1,'<span class="me-3">微软雅黑</span>'+c],
[1,'<span>13px</span>'+s(8,'<path d="M1 7l3-3 3 3zM1 13l3 3 3-3z" fill="#bbb" stroke="none"/>')],
[1,'<b class="ts">B</b>'],[0,'<b class="ts fst-italic">I</b>'],[0,'<b class="ts text-decoration-underline">U</b>'],
[0,'<span class="ts ul">A</span>'+c],
[0,s(17,'<path d="M0 4h17M0 8h12M0 12h17M0 16h12" stroke="#999"/>')+c],
[1,s(18,'<path d="M2 10l7-7 7 7-7 7z" fill="#888" stroke="none"/><path d="M5 1l5 6M17 12v4"/>')+c],
[0,s(20,'<path d="M5 13l9-11" stroke-width="4"/><path d="M0 19h20" stroke="#aaa" stroke-width="3"/>')+c],
[0,s(16,'<path d="M0 4h16M0 10h16M0 16h16" stroke-width="2.500"/>')+c],
[0,s(16,'<path d="M0 4h16"/><path d="M0 10h16" stroke-dasharray="6 3"/><path d="M0 16h16" stroke-dasharray="3 2"/>')+c],
[1,s(18,'<path d="M3 3h6v13h6" stroke="#aaa" stroke-width="1.500"/><circle cx="2" cy="3" r="1" stroke="#aaa"/><circle cx="16" cy="16" r="1" stroke="#aaa"/>')],
[0,c+s(30,'<path d="M2 10h28" stroke="#aaa" stroke-width="1.500"/>')],
[0,c+s(30,'<path d="M2 10h28" stroke="#aaa" stroke-width="1.500"/>')+c],
[1,s(18,'<path d="M0 1h9v9H0zM9 12h9v8H9z" fill="#777" stroke="none"/><path d="M5 6h8v8H5z" fill="#fff" stroke-width="1.500"/>')],
[0,s(18,'<path d="M5 6h8v8H5z" stroke-width="1.500"/><path d="M0 1h9v9H0zM9 11h9v9H9z" fill="#777" stroke="none"/>')],
[1,s(12,'<path d="M0 8h12v10H0z" fill="#777" stroke="none"/><path d="M3 8V5q0-3 3-3t3 3v3"/>')],
[0,s(17,'<path d="M0 9h11v9H0z" fill="#777" stroke="none"/><path d="M9 9V5q0-3 3-3t3 3v3"/>')],
[1,s(20,'<path d="M8 7H4a3 3 0 0 0 0 6h4M12 7h4a3 3 0 0 1 0 6h-4M5 10h10"/>')],
[1,s(18,'<path d="M2 18L13 6" stroke="#222" stroke-width="4"/><path d="M6 2v4M4 4h4M15 1v4M13 3h4M15 11v3" stroke="#222" stroke-width="1.500"/>')]
].map(([d,h])=>`<span class="${d?'dv':''}">${h}</span>`).join('');

// Shape palette, each drawn around its own centre
const draw=a=>a.map(p=>`<svg viewBox="-18 -20 37 41">${p[0]==='<'?p:`<path d="${p}"/>`}</svg>`).join('');
const R='M-15-11h30v22h-30z';
document.getElementById('s1').innerHTML=draw([
'<text y="11" text-anchor="middle" font-size="34" font-weight="700" font-family="DejaVu Serif,serif" fill="#222" stroke="none">T</text>',
'<path d="M-13-15h17l8 7v23h-25z" fill="#ffffb3" stroke="none"/><path d="M3-15v8h8z" fill="#dcdc90" stroke="none"/>',
'<circle r="15"/>',R,'<rect x="-15" y="-11" width="30" height="22" rx="2"/>','M0-13L15 13h-30z','M0-10l15 10L0 10l-15-10z','M0-15l15 11-5 18h-20l-5-18z',
'M-10-13H10L15 0 10 12h-20L-15 0z','M-7-15H7l8 8V7l-8 8H-7l-8-8V-7z','M0-15L4-4h11L6 3l4 12L0 8l-10 7 4-12-9-7h11z','M-15-11Q0-18 15-11L0 15z',
'M-15-5Q0-12 15-5L9 8Q0 5-9 8z','M-4-15h8V-4h11v8H4v11h-8V4h-11v-8h11z','M-7-9Q0-15 5-9 12-12 13-5q4 4 0 8 0 7-7 6-5 4-9 0-8 2-8-4-7-4-2-8-1-8 6-6z','M-12 7C-20-1-11-12 0-12s15 6 15 12S8 11 0 11q-5 0-8-1l-6 2z',
'M-9-10q-3 0-3 3v4l-3 3 3 3v4q0 3 3 3M9-10q3 0 3 3v4l3 3-3 3v4q0 3-3 3','M-11-10h-1q-3 0-3 3V7q0 3 3 3h1M11-10h1q3 0 3 3V7q0 3-3 3h-1','M-3-15q3 0 3 3v9l2 3-2 3v9q0 3-3 3','M3-15Q0-15 0-12v9l-2 3 2 3v9q0 3 3 3',
'M-15-9Q0-14 15-9V12h-30z','M0-15h15V0A15 15 0 1 1 0-15z','M-15 0l9-9v5h21v8H-6v5z','M15 0l-9-9v5h-21v8H6v5z',
'M-15 0l9-9v5H6v-5l9 9-9 9V4H-6v5z','M0-14l9 9H4v20h-8V-5h-5z','M0 15l9-9H4v-20h-8V6h-5z','M0-15l9 9H4V6h5l-9 9-9-9h5V-6h-5z',
'M-15 15v-21q0-9 11-9T8-5V8h5L7 15 1 8h4v-11q0-5-6-5t-6 5v18z','M15 15v-21q0-9-11-9T-8-5V8h-5l6 7 6-7h-4v-11q0-5 6-5t6 5v18z','M-15 15v-30h30l-5 5h-20v20z','<rect x="-15" y="-10" width="30" height="20" rx="2"/>']);
document.getElementById('s2').innerHTML=draw([
R,'M0-12L15 0 0 12-15 0z','<rect x="-15" y="-8" width="30" height="16" rx="7"/>','M-15-11h30V7Q5 4 0 9t-15 0z',
'M-8-11h23L8 11h-23z',R+'M-10-11v22M10-11v22','M-9-11h24q-6 11 0 22H-9q-6 0-6-8v-6q0-8 6-8z',R+'M-15-6h30M-10-11v22',
'<path d="M15 15H0"/><circle r="15"/>','M-9-11H11q4 0 4 11t-4 11H-9q-6 0-6-8v-6q0-8 6-8zM11-11q-4 0-4 11t4 11','M-15-6l30-5v22h-30z','M-7-11h22v22h-30V-3z',
'M-15-8q8 6 15 0t15 0V9Q7 4 0 9t-15 0z','M-8-11H8q7 0 7 11T8 11H-8l-7-11z','M-15-11h30l-5 22h-20z','M-9-11H9l6 11-6 11H-9l-6-11z',
'M-15-8h30','M-15 12V-3l5-5h20l5 5v15','M-15 12V2a15 15 0 0 1 30 0v10','M-15 12v-22h30v22']);

// B-tree diagram
const C='#96ffff',P='#d9a8ff',Y='#ffffa0';let o='';
const rect=(x,y,w,h,f)=>o+=`<rect x="${x}" y="${y}" width="${w}" height="${h}" fill="${f}" stroke="#222" stroke-width="2"/>`;
const txt=(x,y,t,a='middle',f='#444')=>o+=`<text x="${x}" y="${y}" text-anchor="${a}" fill="${f}">${t}</text>`;
const cell=(x,y,w,h,f,t)=>{rect(x,y,w,h,f);txt(x+w/2,y+h/2+5,t)};
o+='<path d="M936 359h533v14H936z" fill="#ffffb3"/>';
cell(365,378,239,39,P,'键值，即表中记录的主键');cell(365,417,239,40,C,'指针，存储子节点地址信息');cell(365,457,239,40,Y,'数据，即表记录中除主键外的数据');
[[680,382,1,16,34],[345,541,2,7,11],[722,541,3,25,31],[1105,541,4,64,88]].forEach(([x,y,n,a,b],i)=>{
rect(x,y,353,101,'none');txt(x+11,y+56,'磁盘块'+n,'start','#666');
const cx=x+(i==1?73:i==3?76:75);
['p1',a,'p2',b,'p3'].forEach((t,k)=>{if(k%2)cell(cx+50*k,y+54,50,36,Y,'data');cell(cx+50*k,y+10,50,44,k%2?P:C,t)});});
[[336,2,4],[528,8,10],[722,14,15],[916,28,29],[1113,40,63],[1309,75,79]].forEach(([x,a,b],i)=>{
rect(x,740,187,95,'none');txt(x+12,793,'磁盘块'+(i+5),'start','#666');
[a,b].forEach((t,k)=>{cell(x+68+k*54,760,54,33,P,t);cell(x+68+k*54,793,54,32,Y,'data')});});
[[779,436,524,540],[880,436,898,540],[982,436,1278,540],[443,596,429,738],[543,596,620,738],[643,596,814,738],[923,596,1008,738],[1206,596,1206,738],[1306,596,1402,738]].forEach(([a,b,x,y])=>{
const L=Math.hypot(x-a,y-b),u=(x-a)/L,v=(y-b)/L,p=x-u*17,q=y-v*17;
o+=`<path d="M${a} ${b}L${p} ${q}" stroke="#222" stroke-width="1.800"/><path d="M${x} ${y}L${p-v*5.5} ${q+u*5.5}L${p+v*5.5} ${q-u*5.5}z" fill="#222"/>`});
[[922,551],[897,573],[947,573],[922,595]].forEach(([x,y])=>o+=`<circle cx="${x}" cy="${y}" r="4" fill="#fff" stroke="#a88" />`);
o+='<path d="M928 579v19M918 588h21" stroke="#222" stroke-width="2"/><path d="M928 584v8" stroke="#b22"/>';
['实例图说明：','每个节点占用一个磁盘块，一个节点上有两个升序排序的关键字和三个指向子树根节点的指针，指针存储的是子节点所在磁盘块的地址。两个关键词划分成的三个范围','域对应三个指针指向的子树的数据的范围域。以根节点为例，关键字为 16 和 34，P1 指针指向的子树的数据范围为小于 16，P2 指针指向的子树的数据范围为','16~34，P3 指针指向的子树的数据范围为大于 34。','查找关键字过程：','1、根据根节点找到磁盘块 1，读入内存。【磁盘 I/O 操作第 1 次】','2、比较关键字 28 在区间（16,34），找到磁盘块 1 的指针 P2。','3、根据 P2 指针找到磁盘块 3，读入内存。【磁盘 I/O 操作第 2 次】'].forEach((t,i)=>txt(365,Math.round(859+i*17.5),t,'start','#555'));
document.getElementById('dia').innerHTML=o;
</script>
</body>
</html>
